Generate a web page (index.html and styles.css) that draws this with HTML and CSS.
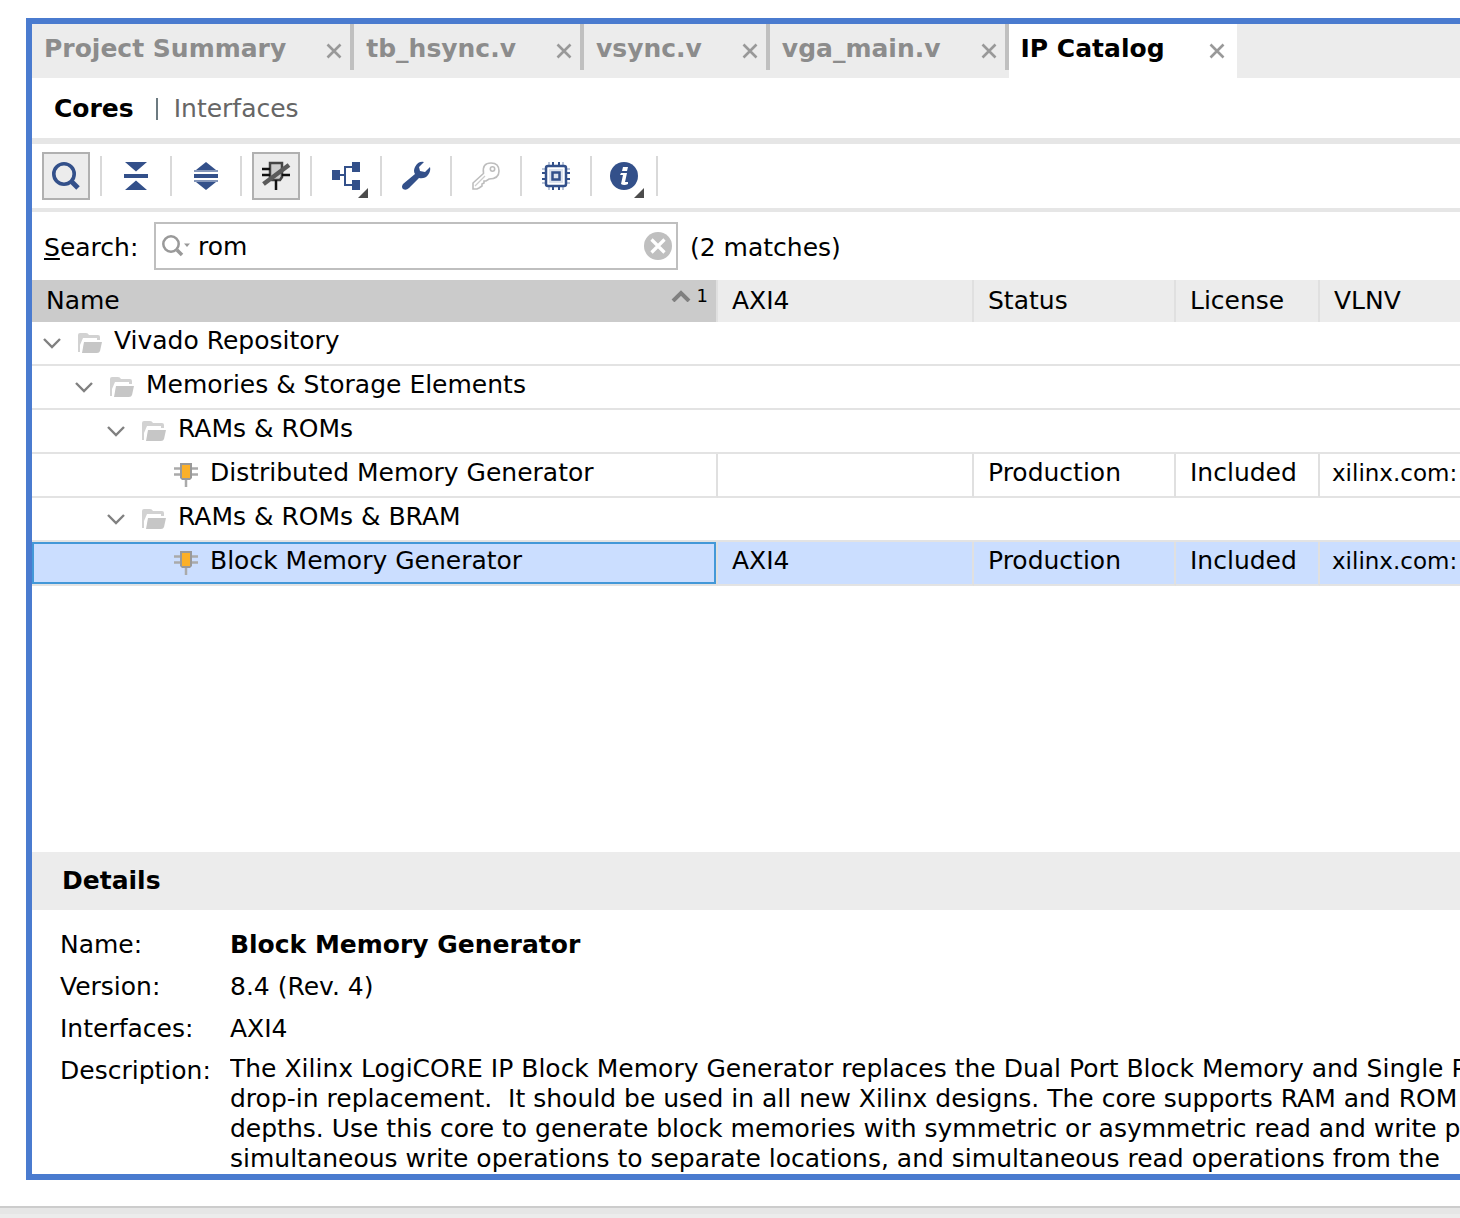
FILE: index.html
```
<!DOCTYPE html>
<html lang="en">
<head>
<meta charset="utf-8">
<meta name="viewport" content="width=device-width, initial-scale=1">
<title>IP Catalog</title>
<link rel="stylesheet" href="styles.css">
</head>
<body>
<svg class="defs" aria-hidden="true">
  <symbol id="close" viewBox="0 0 16 16"><path d="M1.500 1.500L14.500 14.500M14.500 1.500L1.500 14.500" fill="none" stroke="#999" stroke-width="2.600"/></symbol>
  <symbol id="chevron" viewBox="0 0 20 12"><path d="M2 2L10 10L18 2" fill="none" stroke="#808080" stroke-width="2.400"/></symbol>
  <symbol id="folder" viewBox="0 0 24 20"><path d="M0 19V2Q0 0 2 0H8Q10 0 11 2H20Q22 2 22 4V7H19V5H5L2 12V19Z" fill="#d2d2d2"/><path d="M6 9H24L22 18Q21.500 20 19 20H4Z" fill="#c6c6c6"/></symbol>
  <symbol id="core" viewBox="0 0 24 24"><path d="M0 5.500H24M0 11.500H24M12 16V24" fill="none" stroke="#aaa" stroke-width="2.500"/><path d="M6 0H18V15L16 17H8L6 15Z" fill="#999"/><path d="M8 2H16V15H8Z" fill="#fbb028"/></symbol>
  <symbol id="more" viewBox="0 0 10 10"><path d="M10 0V10H0Z" fill="#4c4c4c"/></symbol>
</svg>
<main class="panel">
  <nav class="tabs">
    <div class="tab"><a href="#summary">Project Summary</a><button aria-label="Close Project Summary"><svg><use href="#close"/></svg></button></div>
    <div class="tab"><a href="#tb">tb_hsync.v</a><button aria-label="Close tb_hsync.v"><svg><use href="#close"/></svg></button></div>
    <div class="tab"><a href="#vsync">vsync.v</a><button aria-label="Close vsync.v"><svg><use href="#close"/></svg></button></div>
    <div class="tab"><a href="#vga">vga_main.v</a><button aria-label="Close vga_main.v"><svg><use href="#close"/></svg></button></div>
    <div class="tab active"><a href="#catalog">IP Catalog</a><button aria-label="Close IP Catalog"><svg><use href="#close"/></svg></button></div>
  </nav>
  <nav class="views"><a class="current" href="#cores">Cores</a><span class="bar"></span><a href="#interfaces">Interfaces</a></nav>
  <div class="toolbar">
    <button class="tool on" aria-label="Search"><svg viewBox="0 0 28 28"><circle cx="12" cy="12" r="10.200" fill="none" stroke="#33508a" stroke-width="3.600"/><path d="M20 20L26 26" stroke="#33508a" stroke-width="5"/></svg></button><i></i>
    <button class="tool" aria-label="Collapse all"><svg viewBox="0 0 28 28"><path d="M3 0H25L14 9.500ZM2 12H26V16H2ZM3 28H25L14 18.500Z" fill="#33508a"/></svg></button><i></i>
    <button class="tool" aria-label="Expand all"><svg viewBox="0 0 28 28"><path d="M14 0L24 8H4ZM2 12H26V16H2ZM14 28L24 20H4Z" fill="#33508a"/><path d="M2 9H26M2 19H26" stroke="#8496ba" stroke-width="2"/></svg></button><i></i>
    <button class="tool on" aria-label="Hide incompatible cores"><svg viewBox="0 0 28 28"><path d="M8 1H20V15L18 18H10L8 15Z" fill="#ccc" stroke="#444" stroke-width="2.500"/><path d="M0 7H8M0 13H8M20 13H28M14 18V28" stroke="#111" stroke-width="2.500"/><path d="M1.500 22L27 3" stroke="#5a5a5a" stroke-width="4.500"/></svg></button><i></i>
    <button class="tool" aria-label="Group by"><svg viewBox="0 0 28 28"><path d="M8 13H13M20 5H13V23H20" fill="none" stroke="#33508a" stroke-width="2"/><path d="M0 8H8V18H0ZM20 0H28V10H20ZM20 18H28V28H20Z" fill="#33508a"/></svg><svg class="more"><use href="#more"/></svg></button><i></i>
    <button class="tool" aria-label="Settings"><svg viewBox="0 0 28 28"><path d="M22 0Q16-1 13 5Q11 9 13 12L1 22Q-1 25 1 27Q4 29 7 26L17 16Q23 17 26 13Q29 9 28 5L23 10L18 9L17 5Z" fill="#33508a"/></svg></button><i></i>
    <button class="tool" aria-label="License" disabled><svg viewBox="0 0 28 28"><path d="M11.500 11Q10 1 19 1Q27 1 27 9Q27 17 17 17L14 19H12V21L10 22V24L7 26L5 27H1V21L12 11" fill="none" stroke="#bdbdbd" stroke-width="1.600"/><circle cx="20.500" cy="7" r="2.200" fill="none" stroke="#bdbdbd" stroke-width="1.600"/><path d="M3 24L13 14" stroke="#ccc" stroke-width="1.300"/></svg></button><i></i>
    <button class="tool" aria-label="Chip"><svg viewBox="0 0 28 28"><path d="M11 0V5M17 0V5M11 23V28M17 23V28M0 11H5M0 17H5M23 11H28M23 17H28" stroke="#33508a" stroke-width="2"/><path d="M7 0V3M21 0V3M7 25V28M21 25V28M0 7H3M0 21H3M25 7H28M25 21H28" stroke="#a3b1cb" stroke-width="1.500"/><rect x="4" y="4" width="20" height="20" rx="2" fill="none" stroke="#33508a" stroke-width="2.500"/><rect x="7" y="7" width="14" height="14" fill="#dde3ee"/><rect x="10.500" y="10.500" width="7" height="7" fill="#dde3ee" stroke="#33508a" stroke-width="2.500"/></svg></button><i></i>
    <button class="tool slim" aria-label="Information"><svg viewBox="0 0 28 28"><circle cx="14" cy="14" r="14" fill="#33508a"/><path d="M13 5H18L17 9H12ZM11 11H17L15 20H18V22Q14 24 11 22L13 13H10Z" fill="#fff"/></svg><svg class="more"><use href="#more"/></svg></button><i></i>
  </div>
  <div class="search">
    <label for="q"><u>S</u>earch:</label>
    <div class="field">
      <svg class="lens" viewBox="0 0 28 22"><circle cx="9" cy="9" r="7.700" fill="none" stroke="#999" stroke-width="2.500"/><path d="M15 15L20 20" stroke="#999" stroke-width="3.500"/><path d="M22 8.500H28L25 12Z" fill="#999"/></svg>
      <input id="q" type="text" value="rom">
      <button aria-label="Clear search"><svg viewBox="0 0 28 28"><circle cx="14" cy="14" r="14" fill="#bfbfbf"/><path d="M7.500 7.500L20.500 20.500M20.500 7.500L7.500 20.500" stroke="#fff" stroke-width="3.200"/></svg></button>
    </div>
    <span>(2 matches)</span>
  </div>
  <div class="tree">
    <table>
      <colgroup><col class="c-name"><col class="c-axi"><col class="c-status"><col class="c-license"><col></colgroup>
      <thead><tr><th class="sorted"><div class="head"><span>Name</span><span class="order"><svg viewBox="0 0 20 12"><path d="M2 11L10 3L18 11" fill="none" stroke="#808080" stroke-width="4"/></svg>1</span></div></th><th>AXI4</th><th>Status</th><th>License</th><th>VLNV</th></tr></thead>
      <tbody>
        <tr><td colspan="5"><div class="node"><svg class="chevron"><use href="#chevron"/></svg><svg class="folder"><use href="#folder"/></svg>Vivado Repository</div></td></tr>
        <tr><td colspan="5"><div class="node l1"><svg class="chevron"><use href="#chevron"/></svg><svg class="folder"><use href="#folder"/></svg>Memories &amp; Storage Elements</div></td></tr>
        <tr><td colspan="5"><div class="node l2"><svg class="chevron"><use href="#chevron"/></svg><svg class="folder"><use href="#folder"/></svg>RAMs &amp; ROMs</div></td></tr>
        <tr><td><div class="node leaf"><svg class="core"><use href="#core"/></svg>Distributed Memory Generator</div></td><td></td><td>Production</td><td>Included</td><td class="vlnv">xilinx.com:</td></tr>
        <tr><td colspan="5"><div class="node l2"><svg class="chevron"><use href="#chevron"/></svg><svg class="folder"><use href="#folder"/></svg>RAMs &amp; ROMs &amp; BRAM</div></td></tr>
        <tr class="selected"><td><div class="node leaf"><svg class="core"><use href="#core"/></svg>Block Memory Generator</div></td><td>AXI4</td><td>Production</td><td>Included</td><td class="vlnv">xilinx.com:</td></tr>
      </tbody>
    </table>
  </div>
  <h2>Details</h2>
  <dl>
    <dt>Name:</dt><dd><b>Block Memory Generator</b></dd>
    <dt>Version:</dt><dd>8.4 (Rev. 4)</dd>
    <dt>Interfaces:</dt><dd>AXI4</dd>
    <dt>Description:</dt>
    <dd class="text">The Xilinx LogiCORE IP Block Memory Generator replaces the Dual Port Block Memory and Single Po
drop-in replacement.  It should be used in all new Xilinx designs. The core supports RAM and ROM f
depths. Use this core to generate block memories with symmetric or asymmetric read and write po
simultaneous write operations to separate locations, and simultaneous read operations from the</dd>
  </dl>
</main>
<footer></footer>
</body>
</html>
```
FILE: styles.css
```
* { box-sizing: border-box; }
body {
  margin: 0;
  min-height: 100vh;
  display: flex;
  flex-direction: column;
  padding: 18px 0 0 26px;
  background: #fff;
  color: #000;
  font: 25px/30px "DejaVu Sans", sans-serif;
  overflow-x: hidden;
}
a { color: inherit; text-decoration: none; }
button {
  display: block;
  padding: 0;
  border: 0;
  background: none;
}
svg { display: block; }
.defs { position: absolute; width: 0; height: 0; }
.panel {
  flex: 1;
  display: flex;
  flex-direction: column;
  border: 6px solid #4a7bcf;
  border-right: 0;
  overflow: hidden;
}
.tabs {
  display: flex;
  align-items: flex-start;
  height: 54px;
  background: #ececec;
  font-weight: bold;
  color: #8c8c8c;
  white-space: nowrap;
}
.tab {
  display: flex;
  align-items: center;
  justify-content: space-between;
  gap: 40px;
  height: 46px;
  padding: 4px 8px 0 12px;
  border-right: 4px solid #c0c0c0;
}
.tab svg { width: 16px; height: 16px; margin-top: 4px; }
.tab.active {
  gap: 44px;
  height: 54px;
  padding: 0 12px 4px;
  border: 0;
  background: #fff;
  color: #000;
}
.views {
  display: flex;
  align-items: center;
  height: 66px;
  padding: 2px 22px 0;
  border-bottom: 6px solid #e6e6e6;
  color: #666;
}
.views .current { color: #000; font-weight: bold; }
.bar { width: 2px; height: 22px; margin: 0 16px 0 22px; background: #6c7a80; }
.toolbar {
  display: flex;
  align-items: center;
  gap: 10px;
  height: 68px;
  padding: 0 10px;
  border-bottom: 4px solid #e6e6e6;
}
.toolbar i { width: 2px; height: 40px; background: #d9d9d9; }
.tool {
  position: relative;
  display: grid;
  place-items: center;
  width: 48px;
  height: 48px;
}
.tool svg { width: 28px; height: 28px; overflow: visible; }
.tool.on { border: 2px solid #b0b0b0; background: #ececec; }
.tool.slim { width: 44px; }
.tool .more { position: absolute; right: 2px; bottom: 2px; width: 10px; height: 10px; }
.search {
  display: flex;
  align-items: center;
  height: 68px;
  padding: 0 12px;
}
.search label { width: 110px; padding-top: 4px; }
.search > span { padding: 4px 0 0 12px; }
.field {
  display: flex;
  align-items: center;
  width: 524px;
  height: 48px;
  padding: 0 4px 0 6px;
  border: 2px solid #bfbfbf;
}
.field .lens { width: 28px; height: 22px; }
.field input {
  flex: 1;
  min-width: 0;
  height: 40px;
  padding: 0 8px;
  border: 0;
  outline: 0;
  background: none;
  color: inherit;
  font: inherit;
}
.field button svg { width: 28px; height: 28px; }
.tree { flex: 1; }
table {
  width: 100%;
  table-layout: fixed;
  border-collapse: separate;
  border-spacing: 0;
  white-space: nowrap;
}
.c-name { width: 686px; }
.c-axi { width: 256px; }
.c-status { width: 202px; }
.c-license { width: 144px; }
th, td {
  padding: 0 0 0 14px;
  border-right: 2px solid #e0e0e0;
  text-align: left;
  font-weight: normal;
  overflow: hidden;
}
th { height: 42px; background: #ececec; }
th:last-child, td:last-child { border-right: 0; }
th.sorted { background: #cbcbcb; }
.head { display: flex; justify-content: space-between; }
.order {
  display: flex;
  gap: 6px;
  padding-right: 8px;
  font-size: 18px;
  line-height: 20px;
}
.order svg { width: 20px; height: 12px; margin-top: 4px; }
td {
  height: 44px;
  padding-bottom: 4px;
  border-bottom: 2px solid #e3e3e3;
}
td:first-child { padding: 0; }
td.vlnv { padding-left: 12px; font-size: 23px; }
.node {
  display: flex;
  align-items: center;
  height: 42px;
  padding: 0 0 4px 10px;
}
.node.l1 { padding-left: 42px; }
.node.l2 { padding-left: 74px; }
.node.leaf { padding-left: 142px; }
.node svg { margin-top: 4px; }
.chevron { width: 20px; height: 12px; margin-right: 16px; }
.folder { width: 24px; height: 20px; margin-right: 12px; }
.core { width: 24px; height: 24px; margin-right: 12px; }
.selected td { background: #cbdeff; }
.selected .node { border: 2px solid #4398d8; padding: 0 0 4px 140px; }
h2 {
  margin: 0;
  padding: 14px 30px;
  background: #ececec;
  font: inherit;
  font-weight: bold;
}
dl {
  display: grid;
  grid-template-columns: 170px 1fr;
  row-gap: 10px;
  margin: 0;
  padding: 18px 0 0 28px;
}
dt, dd { margin: 0; padding-top: 2px; }
dd.text { padding-top: 0; white-space: pre; overflow: hidden; }
footer {
  height: 12px;
  margin: 26px 0 0 -26px;
  border-top: 2px solid #ccc;
  background: linear-gradient(#e6e6e6 6px, #ececec 6px);
}
```
